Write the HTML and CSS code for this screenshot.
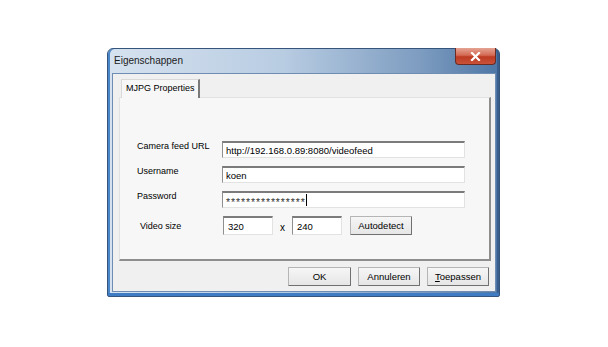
FILE: index.html
```html
<!DOCTYPE html>
<html lang="nl">
<head>
    <meta charset="UTF-8">
    <title>Eigenschappen</title>
    <link rel="stylesheet" href="styles.css">
</head>
<body>

    <div class="window">
        <div class="titlebar">
            <span class="title">Eigenschappen</span>
            <div class="close">
                <svg width="11" height="9" viewBox="0 0 11 9">
                    <path d="M2 1 L9 8 M9 1 L2 8" stroke="#fff" stroke-width="2.2" stroke-linecap="square"/>
                </svg>
            </div>
        </div>

        <div class="client">
            <div class="tabs">
                <div class="tab">MJPG Properties</div>
            </div>

            <div class="panel">
                <div class="row">
                    <label>Camera feed URL</label>
                    <div class="field wide">http://192.168.0.89:8080/videofeed</div>
                </div>
                <div class="row">
                    <label>Username</label>
                    <div class="field wide">koen</div>
                </div>
                <div class="row">
                    <label>Password</label>
                    <div class="field wide"><span class="stars">****************</span><span class="caret"></span></div>
                </div>
                <div class="row video">
                    <label>Video size</label>
                    <div class="field small">320</div>
                    <span class="times">x</span>
                    <div class="field small">240</div>
                    <button class="btn auto">Autodetect</button>
                </div>
            </div>

            <div class="buttons">
                <button class="btn ok">OK</button>
                <button class="btn">Annuleren</button>
                <button class="btn"><u>T</u>oepassen</button>
            </div>
        </div>
    </div>

</body>
</html>
```

FILE: styles.css
```css
/* Windows 7 style property dialog */
body {
    margin: 0;
    background-color: #fff;
    font-family: "Liberation Sans", Arial, sans-serif;
    font-size: 9px;
    color: #000;
}

.window {
    box-sizing: border-box;
    width: 393px;
    height: 249px;
    margin: 48px 0 0 107px;
    border: 1px solid #35557c;
    border-radius: 6px 6px 2px 2px;
    background: linear-gradient(to right, #d6e2ef 0%, #b8cce2 45%, #7d9cc0 80%, #4d76a6 100%);
    box-shadow: inset 0 -3px 0 #3f7cc4, inset 2px 0 0 #4a86c8, inset -2px 0 0 #3a5f8c;
}

.titlebar {
    display: flex;
    align-items: flex-start;
    height: 24px;
}

.title {
    padding: 6px 0 0 6px;
    font-size: 10px;
    color: #1b1b1b;
}

.close {
    display: flex;
    align-items: center;
    justify-content: center;
    width: 41px;
    height: 17px;
    margin: -1px 3px 0 auto;
    box-sizing: border-box;
    border: 1px solid #6b2a22;
    border-top: none;
    border-radius: 0 0 4px 4px;
    background: linear-gradient(#e5a393 0%, #d46a55 45%, #bd3a22 55%, #c9533a 100%);
}

.client {
    box-sizing: border-box;
    width: 384px;
    height: 219px;
    margin-left: 4px;
    border: 1px solid #6f8db2;
    background-color: #f0f0f0;
    padding: 5px 4px 0 6px;
}

.tabs {
    display: flex;
    height: 18px;
    padding-left: 2px;
}

.tab {
    box-sizing: border-box;
    height: 19px;
    padding: 3px 3px 0 4px;
    border: 1px solid #d9d9d9;
    border-right: 2px solid #7a7a7a;
    border-bottom: none;
    background-color: #f7f7f7;
    position: relative;
    z-index: 1;
}

.panel {
    box-sizing: border-box;
    width: 372px;
    height: 164px;
    border: 1px solid #e2e2e2;
    border-right: 2px solid #8e8e8e;
    border-bottom: 2px solid #8e8e8e;
    background-color: #f7f7f7;
    padding: 43px 0 0 17px;
}

.row {
    display: flex;
    align-items: flex-start;
    height: 17px;
    margin-bottom: 8px;
}

.row label {
    width: 85px;
    line-height: 10px;
}

.row.video {
    align-items: center;
    height: 19px;
    margin-top: 3px;
}

.row.video label {
    width: 83px;
    padding-left: 3px;
}

.field {
    box-sizing: border-box;
    height: 17px;
    display: flex;
    align-items: center;
    padding-left: 3px;
    border: 1px solid #e2e2e2;
    border-top: 2px solid #7b7b7b;
    border-left: 1px solid #8f8f8f;
    background-color: #fff;
    font-size: 9.5px;
}

.field.wide {
    width: 243px;
}

.field.small {
    width: 50px;
    height: 19px;
    padding-left: 4px;
}

.stars {
    letter-spacing: 0.9px;
    font-size: 10.5px;
    color: #333;
    padding-top: 4px;
}

.caret {
    width: 1px;
    height: 12px;
    background-color: #000;
}

.times {
    width: 19px;
    text-align: center;
    font-size: 10px;
    padding-top: 3px;
}

.btn {
    box-sizing: border-box;
    width: 62px;
    height: 19px;
    padding: 0;
    border: 1px solid #b5b5b5;
    border-right-color: #707070;
    border-bottom-color: #707070;
    border-radius: 1px;
    background: linear-gradient(#f6f6f6, #e6e6e6);
    font-family: "Liberation Sans", Arial, sans-serif;
    font-size: 9.5px;
    color: #000;
}

.btn.auto {
    margin-left: 8px;
}

.buttons {
    display: flex;
    justify-content: flex-end;
    gap: 7px;
    margin-top: 6px;
    padding-right: 2px;
}

.btn.ok {
    width: 63px;
}
```
